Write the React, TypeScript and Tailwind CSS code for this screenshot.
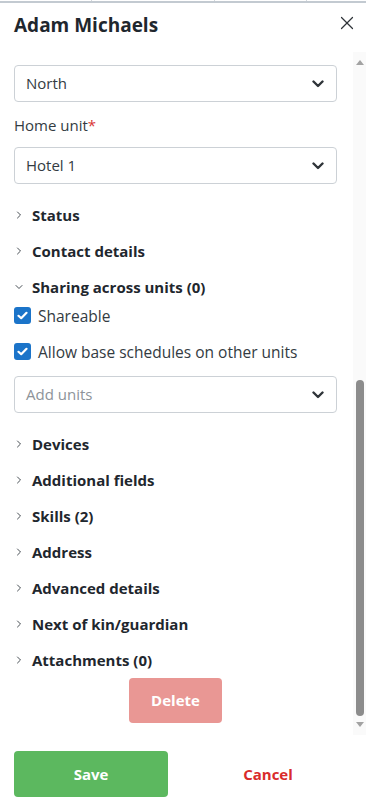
import { ChevronRight, ChevronDown, X } from 'lucide-react';

// Edit-employee drawer, scrolled to the middle of the form.

const collapsedTop = ['Status', 'Contact details'];
const collapsedBottom = [
  'Devices',
  'Additional fields',
  'Skills (2)',
  'Address',
  'Advanced details',
  'Next of kin/guardian',
  'Attachments (0)',
];

function SelectBox({ value, placeholder }: { value?: string; placeholder?: string }) {
  return (
    <div className="h-[37px] flex items-center justify-between border border-[#ccd1d6] rounded-[4px] pl-[11px] pr-[12px]">
      <span className={value ? 'text-[15px] text-[#333b42]' : 'text-[15px] text-[#8d9399]'}>{value ?? placeholder}</span>
      <svg width="12" height="8" viewBox="0 0 12 8" fill="none">
        <path d="M1.5 1.5 L6 6 L10.5 1.5" stroke="#2f3439" strokeWidth="2.4" strokeLinecap="round" strokeLinejoin="round" />
      </svg>
    </div>
  );
}

function Section({ label, open }: { label: string; open?: boolean }) {
  return (
    <div className="h-[36px] flex items-center">
      {open ? (
        <ChevronDown size={12} strokeWidth={1.8} className="text-[#333b42] ml-[13px] mr-[7px] mt-[1px]" />
      ) : (
        <ChevronRight size={12} strokeWidth={1.8} className="text-[#333b42] ml-[13px] mr-[7px] mt-[1px]" />
      )}
      <span className="text-[15px] font-bold text-[#1f272e] pt-[2px]">{label}</span>
    </div>
  );
}

function Check({ label }: { label: string }) {
  return (
    <div className="h-[24px] flex items-center">
      <div className="w-[17px] h-[17px] rounded-[3px] bg-[#1b74c9] flex items-center justify-center">
        <svg width="11" height="9" viewBox="0 0 11 9" fill="none">
          <path d="M1.5 4.8 L4.2 7.2 L9.5 1.8" stroke="white" strokeWidth="2.2" strokeLinecap="round" strokeLinejoin="round" />
        </svg>
      </div>
      <span className="ml-[7px] text-[15.5px] text-[#333b42] pt-[3px]">{label}</span>
    </div>
  );
}

export default function App() {
  return (
    <div className="w-[366px] h-[801px] bg-white overflow-hidden flex flex-col" style={{ fontFamily: '"Open Sans", "Noto Sans", sans-serif' }}>
      {/* table edge peeking behind the drawer */}
      <div className="h-[3px] flex border-b-2 border-[#c3cad1]">
        <div className="w-[92px] border-r border-[#d3d8dd]" />
        <div className="w-[123px] border-r border-[#d3d8dd]" />
        <div className="w-[92px] border-r border-[#d3d8dd]" />
      </div>

      <div className="h-[49px] flex items-start justify-between pl-[14px] pr-[8px] pt-[8px]">
        <h1 className="text-[19px] font-bold text-[#1f272e]">Adam Michaels</h1>
        <X size={22} strokeWidth={1.3} className="text-[#2f3439] mt-[1px]" />
      </div>

      <div className="h-[683px] flex">
        <div className="flex-1 pl-[14px] pr-[16px] pt-[13px]">
          <SelectBox value="North" />
          <div className="mt-[12px] mb-[11px] text-[15px] text-[#333b42] leading-[22px]">
            Home unit<span className="text-[#d93636]">*</span>
          </div>
          <SelectBox value="Hotel 1" />

          <div className="mt-[12px] -ml-[14px]">
            {collapsedTop.map((s) => (
              <Section key={s} label={s} />
            ))}
            <Section label="Sharing across units (0)" open />
          </div>

          <div className="-mt-[1px]">
            <Check label="Shareable" />
            <div className="mt-[12px]">
              <Check label="Allow base schedules on other units" />
            </div>
          </div>

          <div className="mt-[13px]">
            <SelectBox placeholder="Add units" />
          </div>

          <div className="mt-[12px] -ml-[14px]">
            {collapsedBottom.map((s) => (
              <Section key={s} label={s} />
            ))}
          </div>

          <div className="flex justify-center mt-[1px]">
            <button className="w-[93px] h-[45px] rounded-[4px] bg-[#e99794] text-white text-[15px] font-bold">Delete</button>
          </div>
        </div>

        {/* scrollbar */}
        <div className="w-[13px] bg-[#fafafa] flex flex-col items-center pt-[8px] pb-[6px]">
          <div className="w-0 h-0 border-l-[4px] border-r-[4px] border-b-[5px] border-l-transparent border-r-transparent border-b-[#a3a3a3]" />
          <div className="h-[315px]" />
          <div className="w-[8px] h-[336px] rounded-full bg-[#8c8c8c]" />
          <div className="mt-[6px] w-0 h-0 border-l-[4px] border-r-[4px] border-t-[5px] border-l-transparent border-r-transparent border-t-[#a3a3a3]" />
        </div>
      </div>

      <div className="flex items-center pl-[14px] pt-[16px]">
        <button className="w-[154px] h-[46px] rounded-[4px] bg-[#5cb85f] text-white text-[15px] font-bold">Save</button>
        <button className="ml-[23px] w-[154px] h-[46px] text-[#d92b2b] text-[15px] font-bold">Cancel</button>
      </div>
    </div>
  );
}
